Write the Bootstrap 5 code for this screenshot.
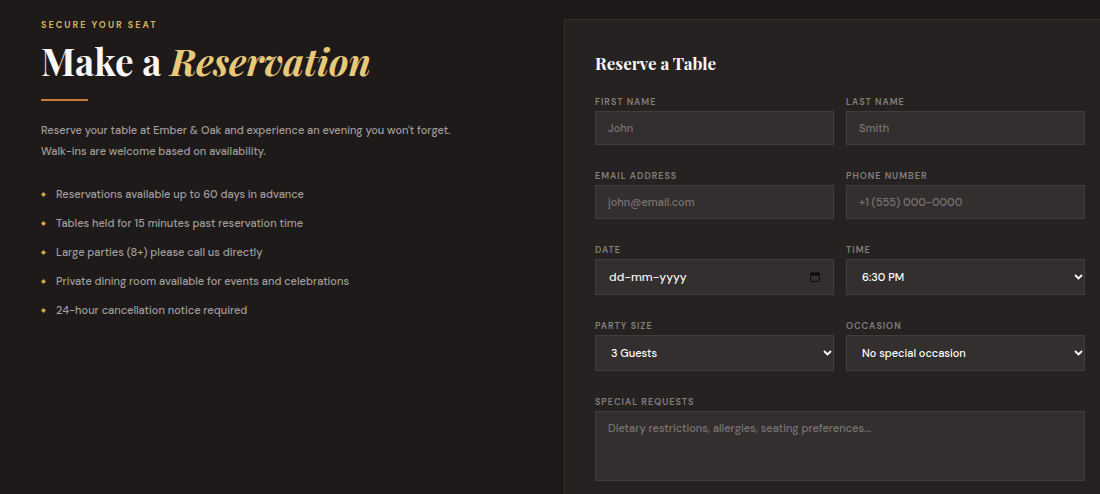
<!DOCTYPE html>
<html lang="en">
<head>
<meta charset="utf-8">
<meta name="viewport" content="width=device-width, initial-scale=1">
<title>Ember &amp; Oak – Make a Reservation</title>
<link href="https://cdn.jsdelivr.net/npm/bootstrap@5.3.0/dist/css/bootstrap.min.css" rel="stylesheet">
<style>
  body { background: #1e1a19; color: #a19d9b; font: 500 11px/21px "DM Sans", "Open Sans", sans-serif; overflow-x: hidden; }
  h1, h2 { font-family: "Playfair Display", "Liberation Serif", serif; font-weight: 700; color: #faf7f8; }
  .intro { padding: 17px 32px 0 41px; }
  .eyebrow { font: 700 9px/16px "DM Sans", Inter, sans-serif; letter-spacing: 2px; color: #d4b160; }
  h1 { font-size: 37px; line-height: 48px; margin: 4px 0 14px; }
  h1 em { color: #e8c97a; }
  .rule { width: 47px; height: 2px; background: #c87832; margin-bottom: 19px; }
  .notes { margin-top: 22px; gap: 8px; }
  .notes li { gap: 10px; }
  .notes svg { width: 5px; height: 5px; fill: #d9a441; }
  .booking { margin: 19px 0 0 14px; padding: 30px 15px 32px 30px; background: #262221; border: 1px solid #3a2e26; border-right: 0; }
  h2 { font-size: 17px; line-height: 26px; margin-bottom: 19px; }
  .fields { --bs-gutter-x: 12px; --bs-gutter-y: 24px; }
  .form-label { display: block; font: 600 9px/14px "DM Sans", Inter, sans-serif; letter-spacing: 1px; color: #85807e; margin-bottom: 2px; }
  .field, .field:focus { height: 34px; padding: 0 12px; font-size: 11px; font-weight: 500; line-height: 18px; color: #fff; background-color: #332f2e; border: 1px solid #413d3b; border-radius: 0; }
  .field.tall { height: 36px; }
  .field::placeholder { color: #7a7573; }
  .field.bright { padding-left: 13px; font-size: 12px; }
  .field.bright::placeholder { color: #f5f2f0; opacity: 1; }
  select.field, select.field:focus { padding-left: 15px; padding-right: 24px; appearance: none; }
  textarea.field { height: 70px; padding: 7px 12px; resize: none; }
  .glyph { position: absolute; top: 50%; transform: translateY(-50%); pointer-events: none; }
  .chevron { right: 2px; }
  .calendar { right: 14px; }
</style>
</head>
<body>
<main class="row g-0">
  <section class="col-6 intro">
    <div class="eyebrow">SECURE YOUR SEAT</div>
    <h1>Make a <em>Reservation</em></h1>
    <div class="rule"></div>
    <p class="mb-0">Reserve your table at Ember &amp; Oak and experience an evening you won't forget.<br>Walk-ins are welcome based on availability.</p>
    <ul class="notes list-unstyled d-flex flex-column mb-0">
      <li class="d-flex align-items-center"><svg viewBox="0 0 6 6" aria-hidden="true"><path d="M3 0 4.500 1.500 6 3 4.500 4.500 3 6 1.500 4.500 0 3 1.500 1.500Z"/></svg>Reservations available up to 60 days in advance</li>
      <li class="d-flex align-items-center"><svg viewBox="0 0 6 6" aria-hidden="true"><path d="M3 0 4.500 1.500 6 3 4.500 4.500 3 6 1.500 4.500 0 3 1.500 1.500Z"/></svg>Tables held for 15 minutes past reservation time</li>
      <li class="d-flex align-items-center"><svg viewBox="0 0 6 6" aria-hidden="true"><path d="M3 0 4.500 1.500 6 3 4.500 4.500 3 6 1.500 4.500 0 3 1.500 1.500Z"/></svg>Large parties (8+) please call us directly</li>
      <li class="d-flex align-items-center"><svg viewBox="0 0 6 6" aria-hidden="true"><path d="M3 0 4.500 1.500 6 3 4.500 4.500 3 6 1.500 4.500 0 3 1.500 1.500Z"/></svg>Private dining room available for events and celebrations</li>
      <li class="d-flex align-items-center"><svg viewBox="0 0 6 6" aria-hidden="true"><path d="M3 0 4.500 1.500 6 3 4.500 4.500 3 6 1.500 4.500 0 3 1.500 1.500Z"/></svg>24-hour cancellation notice required</li>
    </ul>
  </section>
  <section class="col-6">
    <form class="booking">
      <h2>Reserve a Table</h2>
      <div class="row fields mt-0">
        <div class="col-6 mt-0"><label class="form-label" for="first">FIRST NAME</label><input class="form-control field" id="first" type="text" placeholder="John"></div>
        <div class="col-6 mt-0"><label class="form-label" for="last">LAST NAME</label><input class="form-control field" id="last" type="text" placeholder="Smith"></div>
        <div class="col-6"><label class="form-label" for="email">EMAIL ADDRESS</label><input class="form-control field" id="email" type="email" placeholder="john@email.com"></div>
        <div class="col-6"><label class="form-label" for="phone">PHONE NUMBER</label><input class="form-control field" id="phone" type="tel" placeholder="+1 (555) 000-0000"></div>
        <div class="col-6"><label class="form-label" for="date">DATE</label>
          <div class="position-relative"><input class="form-control field tall bright" id="date" type="text" inputmode="numeric" placeholder="dd-mm-yyyy">
            <svg class="glyph calendar" width="10" height="10" viewBox="0 0 10 10" aria-hidden="true"><path d="M1.5 1h7a1 1 0 0 1 1 1v6.500a1 1 0 0 1-1 1h-7a1 1 0 0 1-1-1V2a1 1 0 0 1 1-1Z" fill="none" stroke="#0c0a0a"/><path d="M.5 1h9v2.500h-9zM2 0h1v1H2zM7 0h1v1H7z" fill="#0c0a0a"/></svg></div></div>
        <div class="col-6"><label class="form-label" for="time">TIME</label>
          <div class="position-relative"><select class="form-control field tall" id="time"><option>6:30 PM</option></select>
            <svg class="glyph chevron" width="9" height="6" viewBox="0 0 9 6" aria-hidden="true"><path d="m1 1 3.500 3.500L8 1" fill="none" stroke="#fff" stroke-width="1.800"/></svg></div></div>
        <div class="col-6"><label class="form-label" for="party">PARTY SIZE</label>
          <div class="position-relative"><select class="form-control field tall" id="party"><option>3 Guests</option></select>
            <svg class="glyph chevron" width="9" height="6" viewBox="0 0 9 6" aria-hidden="true"><path d="m1 1 3.500 3.500L8 1" fill="none" stroke="#fff" stroke-width="1.800"/></svg></div></div>
        <div class="col-6"><label class="form-label" for="occasion">OCCASION</label>
          <div class="position-relative"><select class="form-control field tall" id="occasion"><option>No special occasion</option></select>
            <svg class="glyph chevron" width="9" height="6" viewBox="0 0 9 6" aria-hidden="true"><path d="m1 1 3.500 3.500L8 1" fill="none" stroke="#fff" stroke-width="1.800"/></svg></div></div>
        <div class="col-12"><label class="form-label" for="requests">SPECIAL REQUESTS</label><textarea class="form-control field" id="requests" placeholder="Dietary restrictions, allergies, seating preferences..."></textarea></div>
      </div>
    </form>
  </section>
</main>
</body>
</html>
